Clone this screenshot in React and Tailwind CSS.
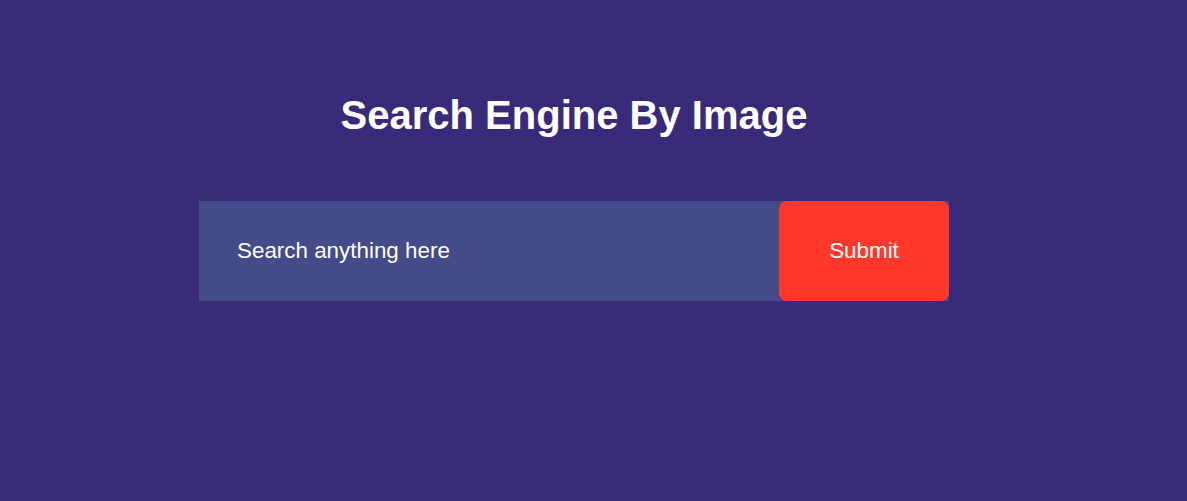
import React from 'react';

export default function App() {
  return (
    <div
      className="min-h-screen w-full bg-[#392979] text-white"
      style={{ fontFamily: '"Liberation Sans", Arial, sans-serif' }}
    >
      <div className="ml-[199px] w-[750px] pt-[95px]">
        {/* Title */}
        <h1 className="text-center text-[40px] font-bold leading-[40px]">
          Search Engine By Image
        </h1>

        {/* Search form */}
        <form
          className="mt-[66px] flex h-[100px] w-full bg-[#454a88]"
          onSubmit={(e) => e.preventDefault()}
        >
          <input
            type="text"
            placeholder="Search anything here"
            className="h-full flex-1 bg-transparent pl-[38px] text-[22.4px] text-white outline-none placeholder:text-white"
          />
          <button
            type="submit"
            className="h-full w-[170px] rounded-lg bg-[#ff382c] text-[22.4px] text-white"
          >
            Submit
          </button>
        </form>
      </div>
    </div>
  );
}
